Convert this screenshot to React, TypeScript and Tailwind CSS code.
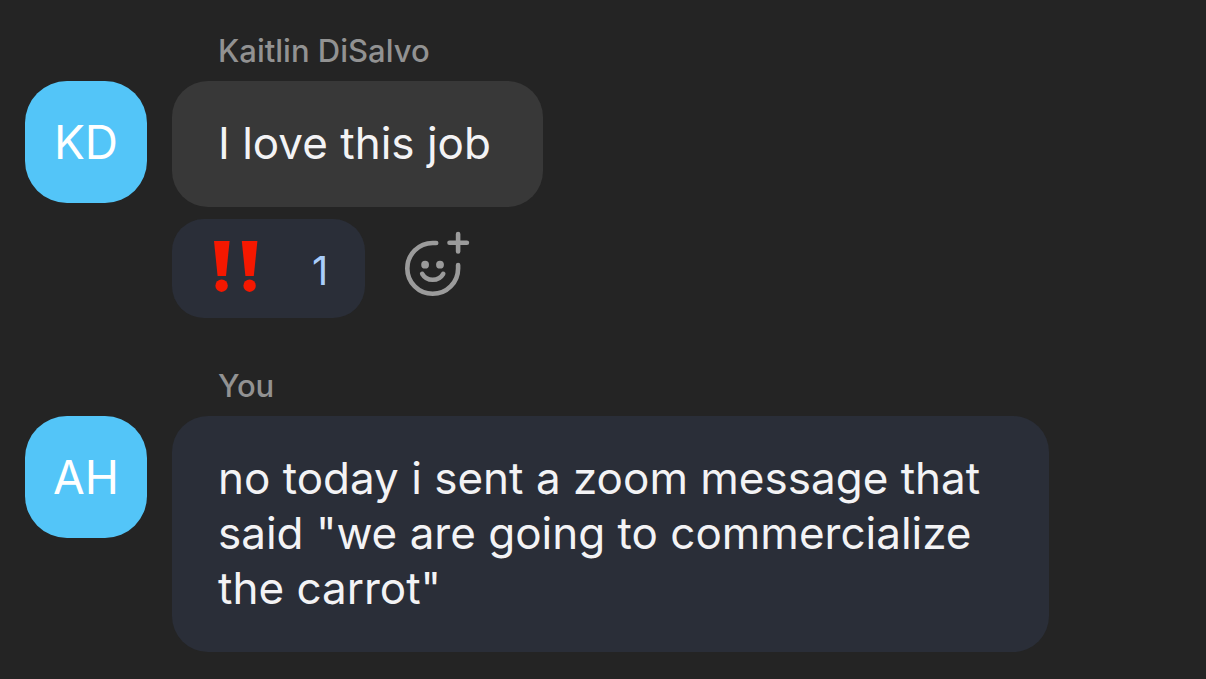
import { clsx } from "clsx";

interface Message {
  id: number;
  author: string;
  initials: string;
  text: string;
  own?: boolean;
  reactions?: number;
}

const messages: Message[] = [
  {
    id: 1,
    author: "Kaitlin DiSalvo",
    initials: "KD",
    text: "I love this job",
    reactions: 1,
  },
  {
    id: 2,
    author: "You",
    initials: "AH",
    text: 'no today i sent a zoom message that said "we are going to commercialize the carrot"',
    own: true,
  },
];

function DoubleExclamation() {
  return (
    <svg width="44" height="56" viewBox="0 0 44 56" fill="#f51800" aria-hidden="true">
      <path d="M0 0h15.600L12 35H3.600z" />
      <circle cx="7.600" cy="44.700" r="6.200" />
      <path d="M27.800 0h15.600L39.800 35h-8.400z" />
      <circle cx="35.600" cy="44.700" r="6.200" />
    </svg>
  );
}

function AddReaction() {
  return (
    <svg
      width="68"
      height="68"
      viewBox="0 0 68 68"
      fill="none"
      stroke="#9b9b9b"
      strokeWidth="4.600"
      strokeLinecap="round"
      aria-hidden="true"
    >
      <path d="M33.200 12h-3.500a25.400 25.400 0 1 0 25.400 25.400v-3.400" />
      <path d="M55.100 3v17.400M46.500 11.700h17.400" />
      <path d="M19.200 42.800c4.500 7.900 16.500 7.900 21 0" />
      <circle cx="22.100" cy="33.700" r="3.900" fill="#9b9b9b" stroke="none" />
      <circle cx="37" cy="33.700" r="3.900" fill="#9b9b9b" stroke="none" />
    </svg>
  );
}

function ChatMessage({ message }: { message: Message }) {
  return (
    <article>
      <h2 className="pl-[193px] text-[31px] leading-9 font-medium text-[#929292]">
        {message.author}
      </h2>
      <div className="mt-3 flex items-start gap-[25px]">
        <div className="flex size-[122px] shrink-0 items-center justify-center rounded-[42px] bg-[#53c5f8] text-[46px] text-white">
          {message.initials}
        </div>
        <div className="max-w-[877px]">
          <p
            className={clsx(
              "w-fit rounded-[36px] pt-[35px] pr-[52px] pb-9 pl-[46px] text-[44px] leading-[55px] text-[#f3f3f5]",
              message.own ? "bg-[#2a2e38]" : "bg-[#383838]",
            )}
          >
            {message.text}
          </p>
          {message.reactions && (
            <div className="mt-3 flex items-start gap-[38px]">
              <button
                type="button"
                aria-label={`Double exclamation, ${message.reactions}`}
                className="flex h-[99px] items-center gap-[54px] rounded-[32px] bg-[#2a2e38] pr-[37px] pl-[42px] text-[40px] text-[#a9cdfb]"
              >
                <DoubleExclamation />
                <span className="pt-1">{message.reactions}</span>
              </button>
              <button type="button" aria-label="Add reaction" className="pt-3">
                <AddReaction />
              </button>
            </div>
          )}
        </div>
      </div>
    </article>
  );
}

export default function App() {
  return (
    <main className="flex min-h-screen flex-col gap-[50px] bg-[#242424] px-[25px] pt-[33px] font-['Inter','Liberation_Sans',sans-serif]">
      {messages.map((message) => (
        <ChatMessage key={message.id} message={message} />
      ))}
    </main>
  );
}
